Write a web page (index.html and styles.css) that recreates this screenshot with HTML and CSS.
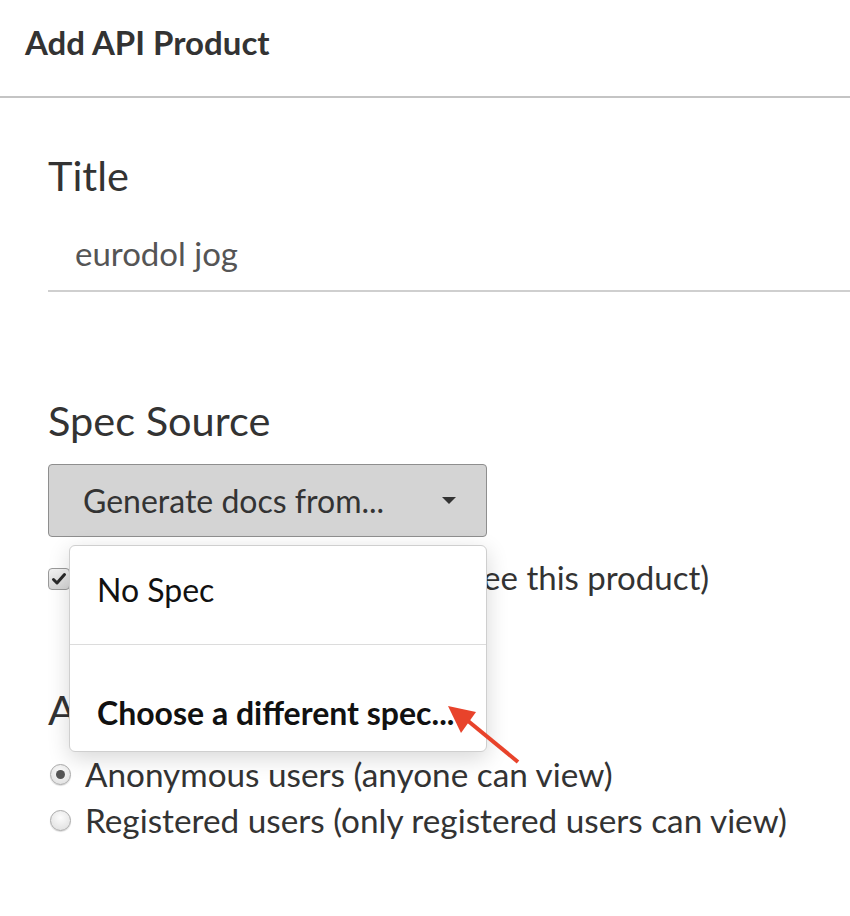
FILE: index.html
```html
<!DOCTYPE html>
<html>
<head>
<meta charset="utf-8">
<link rel="stylesheet" href="styles.css">
</head>
<body>
<div class="page">
  <div class="header">Add API Product</div>
  <div class="content">
    <div class="label label-title">Title</div>
    <div class="input">eurodol jog</div>

    <div class="label label-spec">Spec Source</div>
    <div class="spec">
      <div class="select">
        <span class="select-text">Generate docs from...</span>
        <span class="caret"></span>
      </div>
      <div class="menu">
        <div class="menu-item">No Spec</div>
        <div class="menu-item menu-item-bold">Choose a different spec...</div>
      </div>
      <div class="check-row">
        <span class="checkbox">
          <svg width="18" height="18" viewBox="0 0 18 18"><path d="M3.5 9.5 L7 13 L14.5 4.5" fill="none" stroke="#2a2a2a" stroke-width="3" stroke-linecap="round" stroke-linejoin="round"/></svg>
        </span>
        <span>Published (developers can see this product)</span>
      </div>
    </div>

    <div class="label label-aud">Audience</div>
    <div class="radio-row">
      <span class="radio radio-on"></span>
      <span>Anonymous users (anyone can view)</span>
    </div>
    <div class="radio-row">
      <span class="radio"></span>
      <span>Registered users (only registered users can view)</span>
    </div>
  </div>
  <svg class="arrow" width="100" height="90" viewBox="0 0 100 90">
    <line x1="78" y1="67" x2="22" y2="21" stroke="#e8432b" stroke-width="4" stroke-linecap="butt"/>
    <polygon points="8,11 36,17 21,38" fill="#e8432b"/>
  </svg>
</div>
</body>
</html>
```

FILE: styles.css
```css
html, body {
  margin: 0;
  padding: 0;
  background: #fff;
}
body {
  font-family: Lato, "Open Sans", sans-serif;
  color: #333;
}
.page {
  position: relative;
  width: 850px;
  height: 916px;
  overflow: hidden;
}
.header {
  box-sizing: border-box;
  height: 98px;
  padding: 20px 25px 0;
  font-size: 33px;
  line-height: 44px;
  font-weight: 700;
  color: #333;
  border-bottom: 2px solid #c4c4c4;
}
.content {
  padding-left: 48px;
}
.label {
  font-size: 41.5px;
  line-height: 50px;
  color: #333;
}
.label-title {
  margin-top: 52px;
}
.input {
  margin-top: 31px;
  padding: 0 0 15px 27px;
  font-size: 33px;
  line-height: 44px;
  color: #555;
  border-bottom: 2px solid #cfcfcf;
}
.label-spec {
  margin-top: 103px;
}
.spec {
  position: relative;
  margin-top: 19px;
}
.select {
  box-sizing: border-box;
  width: 439px;
  height: 73px;
  display: flex;
  align-items: center;
  justify-content: space-between;
  padding: 0 30px 0 34px;
  background: #d4d4d4;
  border: 1.5px solid #8e8e8e;
  border-radius: 4px;
  font-size: 32px;
  line-height: 40px;
  color: #333;
}
.caret {
  width: 0;
  height: 0;
  border-left: 7px solid transparent;
  border-right: 7px solid transparent;
  border-top: 7px solid #333;
}
.menu {
  position: absolute;
  left: 21px;
  top: 81px;
  width: 418px;
  box-sizing: border-box;
  background: #fff;
  border: 1px solid #cfcfcf;
  border-radius: 6px;
  box-shadow: 0 6px 22px rgba(0, 0, 0, 0.16);
  z-index: 2;
}
.menu-item {
  padding: 24px 27px 34px;
  font-size: 32px;
  line-height: 40px;
  color: #111;
  border-bottom: 1px solid #dcdcdc;
}
.menu-item-bold {
  padding: 48px 10px 18px 27px;
  font-weight: 700;
  color: #111;
  border-bottom: none;
  white-space: nowrap;
}
.check-row {
  margin-top: 18px;
  display: flex;
  align-items: center;
  gap: 16px;
  font-size: 33px;
  line-height: 44px;
  color: #333;
  white-space: nowrap;
}
.checkbox {
  box-sizing: border-box;
  flex: none;
  display: flex;
  align-items: center;
  justify-content: center;
  width: 22px;
  height: 22px;
  margin: 4px 0 0 0;
  border: 1.5px solid #9a9a9a;
  border-radius: 4px;
  background: linear-gradient(#f2f2f2, #d6d6d6);
}
.label-aud {
  margin-top: 85px;
}
.radio-row {
  display: flex;
  align-items: center;
  gap: 14px;
  font-size: 33.3px;
  line-height: 46px;
  color: #333;
  white-space: nowrap;
}
.label-aud + .radio-row {
  margin-top: 17px;
}
.radio {
  box-sizing: border-box;
  flex: none;
  width: 21px;
  height: 21px;
  margin: 0 0 0 2px;
  border-radius: 50%;
  border: 1.5px solid #aaa;
  background: radial-gradient(circle at 50% 35%, #fcfcfc, #dcdcdc);
  box-shadow: 0 1px 1px rgba(0, 0, 0, 0.15);
  position: relative;
}
.radio-on::after {
  content: "";
  position: absolute;
  left: 50%;
  top: 50%;
  width: 9px;
  height: 9px;
  margin: -4.5px 0 0 -4.5px;
  border-radius: 50%;
  background: #555;
}
.arrow {
  position: absolute;
  left: 440px;
  top: 695px;
  z-index: 3;
}
```
